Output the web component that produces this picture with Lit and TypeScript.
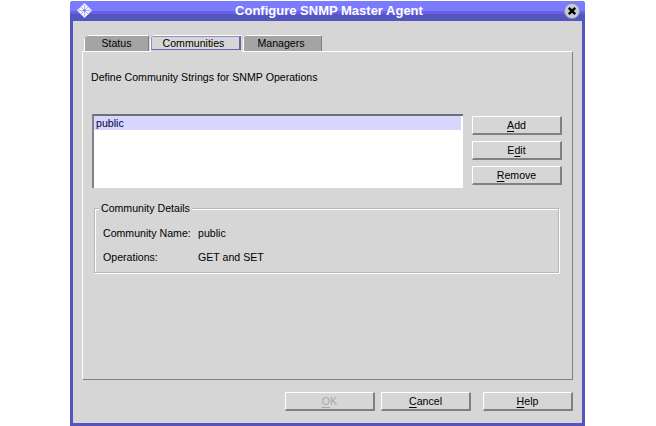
import { LitElement, html, css } from "lit";
import { customElement } from "lit/decorators.js";

@customElement("app-root")
export class AppRoot extends LitElement {
  static styles = css`
    :host { display: block; width: 656px; height: 426px; background: #fff; overflow: hidden;
      font-family: "Liberation Sans", Arial, sans-serif; font-size: 10.6px; color: #000; }
    .window { box-sizing: border-box; width: 515px; height: 425px; margin: 1px 0 0 70px; background: #5555c0;
      padding: 0 3px 3px; display: flex; flex-direction: column; border-radius: 3px 3px 0 0; }
    .titlebar { flex: none; height: 20px; margin: 0 -3px; display: flex; align-items: flex-start; position: relative;
      background: linear-gradient(#7b7bff 0 10px, #6a60e8 10px 13px, #5555c0 13px); border-radius: 3px 3px 0 0; }
    .logo { position: absolute; left: 7px; top: 2px; width: 15px; height: 15px; }
    .close { position: absolute; right: 5px; top: 2px; width: 16px; height: 16px; }
    .title { flex: 1; text-align: center; color: #fff; font: bold 13px/20px "Liberation Sans", Arial, sans-serif; padding-left: 3px; }
    .body { flex: 1; background: #d6d6d6; display: flex; flex-direction: column; padding: 14px 9px 12px; min-height: 0; }
    .tabs { flex: none; display: flex; height: 16px; padding-left: 2px; position: relative; z-index: 1; }
    .tab { box-sizing: border-box; height: 16px; padding-bottom: 2px; display: flex; align-items: center; justify-content: center; background: #a4a4a4;
      border-top: 1px solid #fff; border-left: 1px solid #fff; border-right: 1px solid #808080; clip-path: polygon(4px 0, 100% 0, 100% 100%, 0 100%, 0 4px); }
    .t1 { width: 65px; margin-right: 1px; }
    .t2 { width: 92px; height: 17px; margin-right: 1px; background: #d6d6d6; border-right-color: #d6d6d6; padding-bottom: 2px; align-items: stretch; }
    .focus { flex: 1; box-sizing: border-box; display: flex; align-items: center; justify-content: center; padding-right: 4px;
      border: 1px solid #8c8cd0; border-right-width: 2px; border-right-color: #6464a8; border-bottom-color: #6464a8; }
    .t3 { width: 79px; padding-right: 3px; }
    .panel { flex: 1; box-sizing: border-box; min-height: 0; border-top: 1px solid #fff; border-left: 1px solid #fff; border-right: 1px solid #808080; border-bottom: 1px solid #808080;
      display: flex; flex-direction: column; padding: 18px 9px 0 8px; }
    .desc { height: 14px; line-height: 14px; }
    .listrow { display: flex; margin: 30px 0 0 1px; gap: 9px; }
    .list { box-sizing: border-box; width: 371px; height: 74px; background: #fff; border-top: 2px solid #707078; border-left: 2px solid #808088; }
    .item { background: #d6d6ff; color: #000040; height: 14px; line-height: 14px; padding-left: 2px; margin-right: 2px; }
    .side { display: flex; flex-direction: column; gap: 6px; padding-top: 2px; }
    .btn { box-sizing: border-box; width: 90px; height: 19px; background: #d6d6d6; border-top: 1px solid #fff; border-left: 1px solid #fff; border-right: 2px solid #808080; border-bottom: 2px solid #808080;
      display: flex; align-items: center; justify-content: center; line-height: 14px; }
    .btn u { text-underline-offset: 2px; }
    .btn.off { color: #aaa; }
    .group { box-sizing: border-box; position: relative; width: 465px; height: 65px; margin: 20px 0 0 3px; border: 1px solid #b8b8b8;
      box-shadow: inset 1px 1px 0 #fff, 1px 1px 0 #fff; padding: 17px 0 0 8px; }
    .legend { position: absolute; left: 4px; top: -7px; background: #d6d6d6; padding: 0 2px; line-height: 13px; }
    .dl { display: grid; grid-template-columns: 95px 1fr; row-gap: 10px; line-height: 14px; }
    .footer { flex: none; display: flex; justify-content: flex-end; padding-top: 12px; }
    .footer .btn { margin-left: 6px; }
    .footer .btn.h { margin-left: 12px; }
  `;

  render() {
    return html`
      <div class="window">
        <div class="titlebar">
          <svg class="logo" viewBox="0 0 18 18">
            <path d="M9 0 18 9 9 18 0 9Z" fill="#f0f0ff" />
            <path d="M5 5l8 8M13 5l-8 8M9 2v14M2 9h14" stroke="#a8a8e8" stroke-width="1" fill="none" />
            <circle cx="9" cy="9" r="1.6" fill="#7b7bff" />
          </svg>
          <div class="title">Configure SNMP Master Agent</div>
          <svg class="close" viewBox="0 0 16 16">
            <circle cx="8" cy="8" r="7.6" fill="#c4ccd4" stroke="#8a8aa8" stroke-width="0.8" />
            <path d="M4.8 4.8l6.4 6.4M11.2 4.8l-6.4 6.4" stroke="#000" stroke-width="2.4" />
          </svg>
        </div>
        <div class="body">
          <div class="tabs">
            <div class="tab t1">Status</div>
            <div class="tab t2"><div class="focus">Communities</div></div>
            <div class="tab t3">Managers</div>
          </div>
          <div class="panel">
            <div class="desc">Define Community Strings for SNMP Operations</div>
            <div class="listrow">
              <div class="list"><div class="item">public</div></div>
              <div class="side">
                <div class="btn"><span><u>A</u>dd</span></div>
                <div class="btn"><span>E<u>d</u>it</span></div>
                <div class="btn"><span><u>R</u>emove</span></div>
              </div>
            </div>
            <div class="group">
              <div class="legend">Community Details</div>
              <div class="dl">
                <div>Community Name:</div><div>public</div>
                <div>Operations:</div><div>GET and SET</div>
              </div>
            </div>
          </div>
          <div class="footer">
            <div class="btn off"><span><u>O</u>K</span></div>
            <div class="btn"><span><u>C</u>ancel</span></div>
            <div class="btn h"><span><u>H</u>elp</span></div>
          </div>
        </div>
      </div>
    `;
  }
}
